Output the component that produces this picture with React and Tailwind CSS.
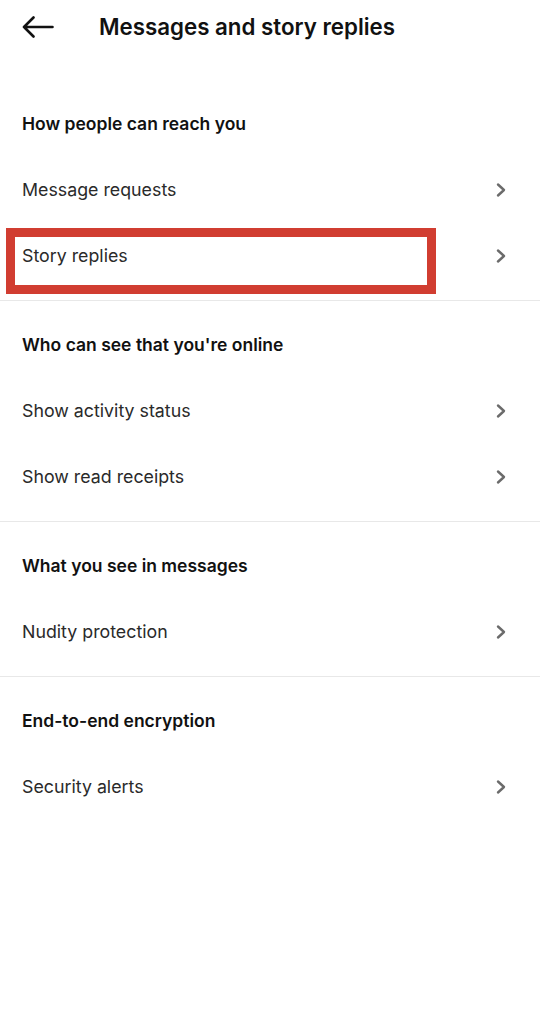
const sections = [
  { title: "How people can reach you", items: ["Message requests", "Story replies"] },
  { title: "Who can see that you're online", items: ["Show activity status", "Show read receipts"] },
  { title: "What you see in messages", items: ["Nudity protection"] },
  { title: "End-to-end encryption", items: ["Security alerts"] },
];

function Chevron() {
  return (
    <svg width="12" height="16" viewBox="0 0 12 16" fill="none">
      <path d="M3 2.5L9 8L3 13.5" stroke="#6b6b6b" strokeWidth="2.4" strokeLinecap="round" strokeLinejoin="round" />
    </svg>
  );
}

export default function App() {
  return (
    <div className="w-[540px] h-[1024px] bg-white text-black font-['Inter','Roboto',sans-serif]">
      <div className="h-[54px] flex items-center pl-[22px]">
        <svg width="32" height="22" viewBox="0 0 32 22" fill="none">
          <path d="M30.5 11H2M11.5 1.5L2 11L11.5 20.5" stroke="#111" strokeWidth="2.6" strokeLinecap="round" strokeLinejoin="round" />
        </svg>
        <h1 className="ml-[45px] text-[22.3px] font-semibold text-[#111]">Messages and story replies</h1>
      </div>

      <div className="pt-[26px]">
        {sections.map((s, i) => (
          <div key={s.title} className={`py-[11px] ${i > 0 ? "border-t border-[#e8e8e8]" : ""}`}>
            <div className="h-[66px] flex items-center px-[22px] text-[17.5px] font-semibold text-[#111]">{s.title}</div>
            {s.items.map((item) => (
              <div key={item} className="relative h-[66px] flex items-center justify-between pl-[22px] pr-[33px]">
                <span className="text-[17.8px] text-[#2a2a2a]">{item}</span>
                <Chevron />
                {item === "Story replies" && (
                  <div className="absolute left-[6px] top-[5px] w-[430px] h-[66px] border-[9px] border-[#d13d31]" />
                )}
              </div>
            ))}
          </div>
        ))}
      </div>
    </div>
  );
}
